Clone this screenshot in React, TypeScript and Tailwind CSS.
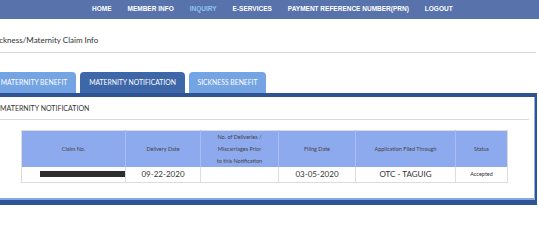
import React from 'react'

const navItems = [
  { label: 'HOME', active: false },
  { label: 'MEMBER INFO', active: false },
  { label: 'INQUIRY', active: true },
  { label: 'E-SERVICES', active: false },
  { label: 'PAYMENT REFERENCE NUMBER(PRN)', active: false },
  { label: 'LOGOUT', active: false },
]

const tabs = [
  { label: 'MATERNITY BENEFIT', active: false, w: 'w-[84px]' },
  { label: 'MATERNITY NOTIFICATION', active: true, w: 'w-[105px]' },
  { label: 'SICKNESS BENEFIT', active: false, w: 'w-[77px]' },
]

const body = { fontFamily: 'Lato, "Open Sans", sans-serif' }

const App: React.FC = () => {
  return (
    <div className="w-[539px] h-[240px] overflow-hidden bg-white" style={body}>
      {/* top nav */}
      <div
        className="h-[19px] bg-[#5873ab] flex items-center pl-[92px] gap-[16px]"
        style={{ fontFamily: '"Liberation Sans", Arial, sans-serif' }}
      >
        {navItems.map((n) => (
          <span
            key={n.label}
            className={`text-[6.5px] font-bold leading-none whitespace-nowrap ${
              n.active ? 'text-[#8cc3f2]' : 'text-white'
            }`}
          >
            {n.label}
          </span>
        ))}
      </div>

      {/* breadcrumb */}
      <div className="w-[536px] h-[34px] flex items-end pb-[8px] border-b border-[#d6d6d6]">
        <span className="-ml-[7px] text-[8px] leading-none text-[#333] whitespace-nowrap">
          Sickness/Maternity Claim Info
        </span>
      </div>

      {/* tabs */}
      <div className="mt-[19px] flex items-end gap-[4px] -ml-[8px] h-[21px]">
        {tabs.map((t) => (
          <div
            key={t.label}
            className={`${t.w} h-[21px] rounded-t-[4px] flex items-center justify-center text-[6.8px] text-white whitespace-nowrap leading-none ${
              t.active ? 'bg-[#3d67a9]' : 'bg-[#74a4e4]'
            }`}
          >
            {t.label}
          </div>
        ))}
      </div>

      {/* panel */}
      <div className="w-[537px] border-t-[4px] border-r-[2px] border-b-[5px] border-[#2f5493] bg-white">
        <div className="border-r border-[#8fb2e8]">
          <div className="w-[529px] h-[23px] flex items-end pb-[7px] border-b border-[#dadada]">
            <span className="text-[7px] leading-none text-[#333] whitespace-nowrap">
              MATERNITY NOTIFICATION
            </span>
          </div>

          <div className="pl-[21px] pt-[10px] pb-[15px]">
            <table className="w-[487px] border-collapse border border-[#dcdcdc] text-[#444]">
              <thead>
                <tr className="bg-[#8eaaee] h-[36px] text-[5.5px] leading-[12px]">
                  <th className="w-[104px] font-normal">Claim No.</th>
                  <th className="w-[75px] font-normal border-l border-[#a8bdf2]">Delivery Date</th>
                  <th className="w-[78px] font-normal border-l border-[#a8bdf2]">
                    No. of Deliveries /<br />
                    Miscarriages Prior
                    <br />
                    to this Notification
                  </th>
                  <th className="w-[77px] font-normal border-l border-[#a8bdf2]">Filing Date</th>
                  <th className="w-[100px] font-normal border-l border-[#a8bdf2]">
                    Application Filed Through
                  </th>
                  <th className="font-normal border-l border-[#a8bdf2]">Status</th>
                </tr>
              </thead>
              <tbody>
                <tr className="h-[15px] text-center text-[8px] text-[#333] leading-none">
                  <td className="pl-[18px] pr-0">
                    <div className="h-[6px] bg-[#2e2e2e]" />
                  </td>
                  <td className="border-l border-[#dcdcdc]">09-22-2020</td>
                  <td className="border-l border-[#dcdcdc]" />
                  <td className="border-l border-[#dcdcdc]">03-05-2020</td>
                  <td className="border-l border-[#dcdcdc]">OTC - TAGUIG</td>
                  <td className="border-l border-[#dcdcdc] text-[5.5px]">Accepted</td>
                </tr>
              </tbody>
            </table>
          </div>
          <div className="h-[2px] bg-[#82a9e6]" />
        </div>
      </div>
    </div>
  )
}

export default App
